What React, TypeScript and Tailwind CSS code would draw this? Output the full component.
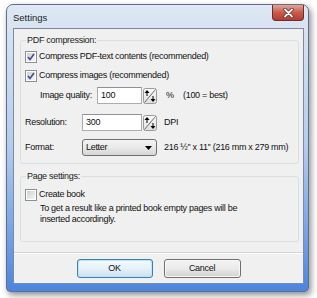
import React from "react";

function Check({ checked }: { checked: boolean }) {
  return (
    <span className="w-[12px] h-[12px] shrink-0 border border-[#8e8f8f] bg-white p-[1px] flex">
      <span className="flex-1 bg-gradient-to-br from-[#cfd0d2] to-[#f6f6f6] flex items-center justify-center">
        {checked && (
          <svg width="8" height="8" viewBox="0 0 8 8">
            <path d="M1 4 L3 6.5 L7 1" fill="none" stroke="#3b4f8e" strokeWidth="1.6" />
          </svg>
        )}
      </span>
    </span>
  );
}

function Spin({ id }: { id: string }) {
  return (
    <svg width="14" height="16" viewBox="0 0 14 16" className="shrink-0">
      <defs>
        <linearGradient id={id} x1="0" y1="0" x2="0" y2="1">
          <stop offset="0" stopColor="#fcfcfc" />
          <stop offset="1" stopColor="#dedede" />
        </linearGradient>
      </defs>
      <rect x="0.5" y="0.5" width="13" height="15" rx="2" fill={`url(#${id})`} stroke="#9a9a9a" />
      <line x1="1.5" y1="14.5" x2="12.5" y2="1.5" stroke="#6a6a6a" />
      <path d="M4 2 L1.5 5 L6.5 5 Z" fill="#000" />
      <rect x="3.5" y="5" width="1" height="3" fill="#000" />
      <path d="M10 14 L7.5 11 L12.5 11 Z" fill="#000" />
      <rect x="9.5" y="8" width="1" height="3" fill="#000" />
    </svg>
  );
}

function Input({ value, w }: { value: string; w: string }) {
  return (
    <div className={`${w} h-[17px] bg-white border border-[#abadb3] border-t-[#8e9199] flex items-center pl-[3px]`}>
      {value}
    </div>
  );
}

export default function App() {
  return (
    <div className="w-[317px] h-[298px] bg-white overflow-hidden font-['Liberation_Sans',Arial,sans-serif] text-[9px] tracking-[-0.3px] text-[#111]">
      <div className="ml-[6px] mt-[4px] w-[303px] h-[288px] border border-[#5f6f86] rounded-t-[7px] rounded-b-[4px] bg-gradient-to-b from-[#dfe8f4] via-[#b3cbee] to-[#4a85e0] shadow-[2px_3px_6px_rgba(0,0,0,0.45)] flex flex-col">
        <div className="h-[23px] flex items-start justify-between">
          <span className="mt-[6px] ml-[6px] text-[9.5px] tracking-normal text-[#1a1a1a]">Settings</span>
          <div className="mr-[4px] w-[32px] h-[16px] rounded-b-[4px] border border-t-0 border-[#6b2d28] bg-gradient-to-b from-[#e3a597] via-[#c95a4c] to-[#b43e30] flex items-center justify-center">
            <svg width="11" height="10" viewBox="0 0 11 10">
              <path d="M2 1.5 L9 8.5 M9 1.5 L2 8.5" stroke="#5a2420" strokeWidth="3.2" strokeLinecap="round" />
              <path d="M2 1.5 L9 8.5 M9 1.5 L2 8.5" stroke="#ffffff" strokeWidth="1.8" strokeLinecap="round" />
            </svg>
          </div>
        </div>
        <div className="ml-[6px] mr-[4px] mb-[7px] flex-1 border border-[#7f8b9b] bg-[#f0f0f0] flex flex-col">
          {/* Group 1 */}
          <div className="relative ml-[6px] mr-[4px] mt-[11px] h-[124px] border border-[#d5dfe5] rounded-[3px] flex flex-col pl-[4px] pt-[8px]">
            <span className="absolute left-[5px] top-[-6px] px-[1px] bg-[#f0f0f0] leading-[11px] text-[#222]">PDF compression:</span>
            <div className="h-[16px] flex items-center gap-[2px]">
              <Check checked />
              <span>Compress PDF-text contents (recommended)</span>
            </div>
            <div className="mt-[3px] h-[16px] flex items-center gap-[2px]">
              <Check checked />
              <span>Compress images (recommended)</span>
            </div>
            <div className="mt-[3px] h-[17px] flex items-center pl-[15px]">
              <span className="w-[57px]">Image quality:</span>
              <Input value="100" w="w-[45px]" />
              <span className="ml-[1px]"><Spin id="s1" /></span>
              <span className="ml-[9px] w-[17px]">%</span>
              <span>(100 = best)</span>
            </div>
            <div className="mt-[10px] h-[17px] flex items-center">
              <span className="w-[57px]">Resolution:</span>
              <Input value="300" w="w-[60px]" />
              <span className="ml-[1px]"><Spin id="s2" /></span>
              <span className="ml-[7px]">DPI</span>
            </div>
            <div className="mt-[8px] h-[17px] flex items-center">
              <span className="w-[57px]">Format:</span>
              <div className="w-[75px] h-[17px] rounded-[3px] border border-[#707070] bg-gradient-to-b from-[#f3f3f3] via-[#e9e9e9] to-[#d6d6d6] flex items-center justify-between pl-[3px] pr-[4px]">
                <span>Letter</span>
                <svg width="7" height="4" viewBox="0 0 7 4">
                  <path d="M0 0 L7 0 L3.5 4 Z" fill="#000" />
                </svg>
              </div>
              <span className="ml-[7px]">216 ½'' x 11'' (216 mm x 279 mm)</span>
            </div>
          </div>
          {/* Group 2 */}
          <div className="relative ml-[6px] mr-[4px] mt-[12px] h-[66px] border border-[#d5dfe5] rounded-[3px] flex flex-col pl-[4px] pt-[11px]">
            <span className="absolute left-[5px] top-[-6px] px-[1px] bg-[#f0f0f0] leading-[11px] text-[#222]">Page settings:</span>
            <div className="h-[14px] flex items-center gap-[2px]">
              <Check checked={false} />
              <span>Create book</span>
            </div>
            <div className="mt-[1px] pl-[15px] leading-[11px]">
              To get a result like a printed book empty pages will be
              <br />
              inserted accordingly.
            </div>
          </div>
          <div className="mt-[10px] h-[2px] border-t border-[#d4d4d4] border-b border-b-white" />
          <div className="mt-[5px] flex justify-center gap-[11px]">
            <div className="w-[76px] h-[19px] rounded-[3px] border border-[#3c7fb1] p-[1px] bg-[#b9e6fb]">
              <div className="h-full rounded-[2px] bg-gradient-to-b from-[#f4f9fd] via-[#e6f1f9] to-[#cfe2ef] flex items-center justify-center">OK</div>
            </div>
            <div className="w-[77px] h-[19px] rounded-[3px] border border-[#707070] p-[1px] bg-[#f8f8f8]">
              <div className="h-full rounded-[2px] bg-gradient-to-b from-[#f2f2f2] via-[#ebebeb] to-[#d4d4d4] flex items-center justify-center">Cancel</div>
            </div>
          </div>
        </div>
      </div>
    </div>
  );
}
